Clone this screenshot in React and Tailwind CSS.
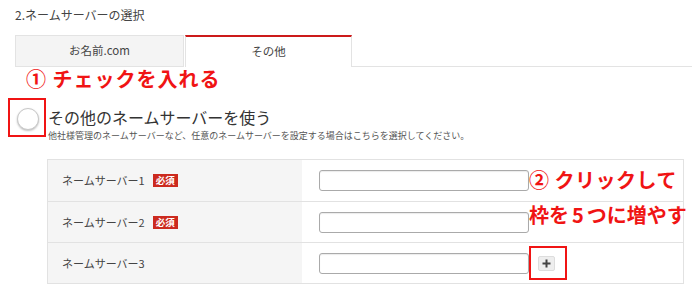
const font = { fontFamily: '"Noto Sans CJK JP", "Noto Sans", sans-serif' }

const rows = [
  { label: 'ネームサーバー1', required: true },
  { label: 'ネームサーバー2', required: true },
  { label: 'ネームサーバー3', required: false, plus: true },
]

export default function App() {
  return (
    <div
      className="relative w-[700px] h-[299px] bg-white text-[#333] overflow-hidden font-['Noto_Sans_CJK_JP',sans-serif]"
    >
      <div className="pl-[15px] pt-[6px] text-[12px] leading-[18px] text-[#444]">2.ネームサーバーの選択</div>

      {/* tabs */}
      <div className="flex ml-[15px] mr-[8px] mt-[11px] h-[32px]">
        <div className="w-[169px] flex items-center justify-center bg-[#f4f4f4] border border-[#e3e3e3] text-[11.5px] text-[#444]">
          お名前.com
        </div>
        <div className="w-[167px] ml-[1px] flex items-center justify-center bg-white border-t-2 border-t-[#cc1a1a] border-x border-x-[#e3e3e3] text-[11.5px] text-[#444]">
          その他
        </div>
        <div className="flex-1 border-b border-[#e3e3e3]" />
      </div>

      {/* radio row */}
      <div className="flex items-start mt-[40px] ml-[17px]">
        <div className="w-[22px] h-[22px] mt-[1px] rounded-full border border-[#c8c8c8] bg-white shadow-[0_1px_2px_rgba(0,0,0,0.25)]" />
        <div className="ml-[9px]">
          <div className="text-[16px] leading-[21px] text-[#333]">その他のネームサーバーを使う</div>
          <div className="text-[9px] leading-[12px] text-[#555] mt-[2px]">
            他社様管理のネームサーバーなど、任意のネームサーバーを設定する場合はこちらを選択してください。
          </div>
        </div>
      </div>

      {/* table */}
      <div className="ml-[47px] mt-[17px] w-[637px] border border-[#e2e2e2]">
        {rows.map((r, i) => (
          <div key={r.label} className={`flex h-[41px] ${i > 0 ? 'border-t border-[#e2e2e2]' : ''}`}>
            <div className="w-[254px] bg-[#f5f5f5] flex items-center pl-[14px] text-[11px] text-[#444]">
              <span>{r.label}</span>
              {r.required && (
                <span className="ml-[8px] bg-[#cc2a1f] text-white text-[9.5px] leading-[13px] px-[3px] font-bold">必須</span>
              )}
            </div>
            <div className="flex-1 flex items-center pl-[17px]">
              <div className="w-[210px] h-[21px] rounded-[3px] border border-[#aaa] shadow-[inset_0_1px_1px_rgba(0,0,0,0.08)]" />
              {r.plus && (
                <div className="ml-[9px] w-[17px] h-[15px] rounded-[2px] bg-[#eee] border border-[#ddd] flex items-center justify-center">
                  <svg width="9" height="9" viewBox="0 0 9 9">
                    <path d="M4.5 0.5v8M0.5 4.5h8" stroke="#444" strokeWidth="2" />
                  </svg>
                </div>
              )}
            </div>
          </div>
        ))}
      </div>

      {/* annotations */}
      <div className="absolute left-[26px] top-[65px] text-[#f01414] font-bold text-[20px] leading-[28px] tracking-[1px]" style={font}>
        ① チェックを入れる
      </div>
      <div className="absolute left-[8px] top-[98px] w-[38px] h-[39px] border-2 border-[#f01414]" />

      <div className="absolute left-[529px] top-[166px] text-[#f01414] font-bold text-[20px] leading-[28px] tracking-[0.5px]" style={font}>
        ② クリックして
      </div>
      <div className="absolute left-[529px] top-[201px] text-[#f01414] font-bold text-[20px] leading-[28px]" style={font}>
        枠を<span className="px-[3px]">5</span>つに増やす
      </div>
      <div className="absolute left-[529px] top-[246px] w-[38px] h-[34px] border-2 border-[#f01414]" />
    </div>
  )
}
